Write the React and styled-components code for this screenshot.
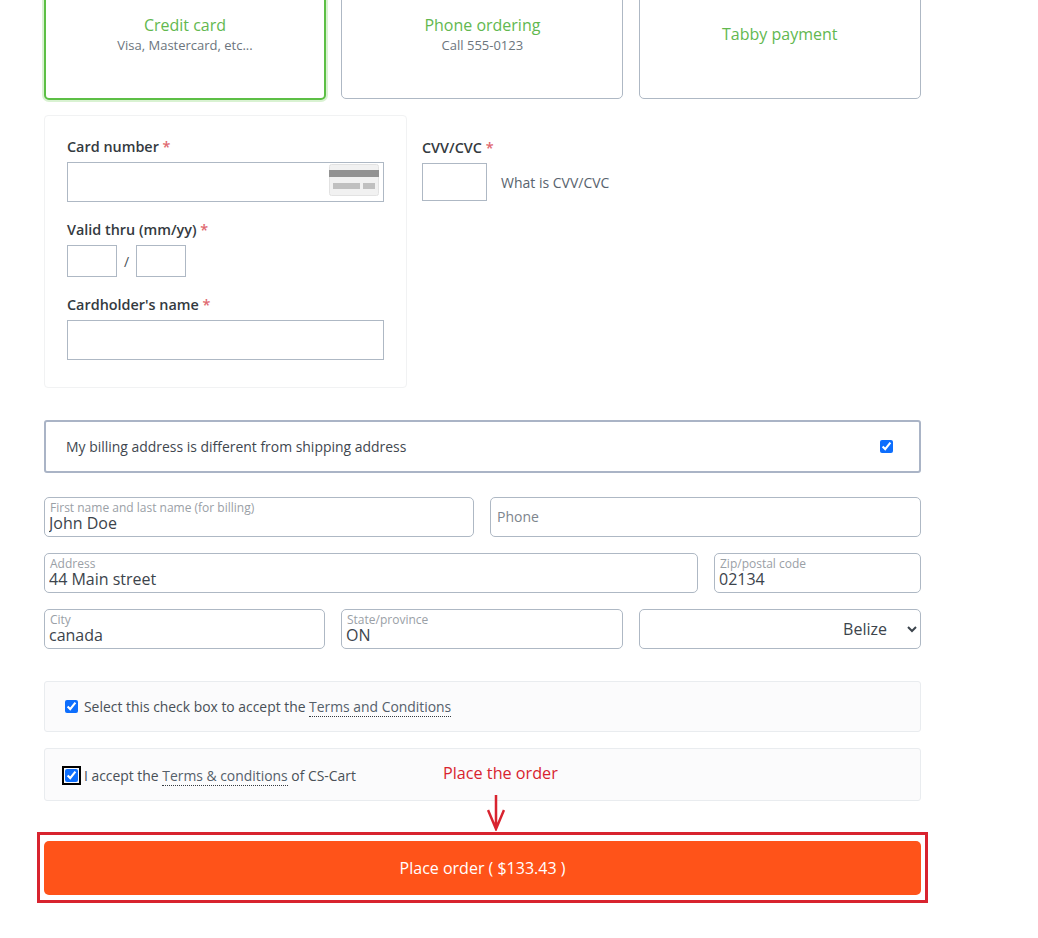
import React from "react";
import styled, { createGlobalStyle } from "styled-components";

const GlobalStyle = createGlobalStyle`
    html, body {
        margin: 0;
        padding: 0;
        background: #fff;
        font-family: "Open Sans", "Noto Sans", sans-serif;
        color: #343a40;
        overflow: hidden;
    }
    * {
        box-sizing: border-box;
    }
`;

function CardIcon() {
    return (
        <CardSvg viewBox="0 0 50 32" width="50" height="32">
            <rect x="0.5" y="0.5" width="49" height="31" rx="2" fill="#f1f1f1" stroke="#e2e2e2" />
            <rect x="0" y="6" width="50" height="7" fill="#929292" />
            <rect x="4" y="19" width="27" height="6" fill="#c0c0c0" />
            <rect x="34" y="19" width="12" height="6" fill="#c0c0c0" />
        </CardSvg>
    );
}

function Tab({ active, title, note }) {
    return (
        <TabBox $active={active}>
            <TabTitle>{title}</TabTitle>
            {note && <TabNote>{note}</TabNote>}
        </TabBox>
    );
}

function Field({ label, value, placeholder }) {
    return (
        <FieldBox>
            {label && <FieldLabel>{label}</FieldLabel>}
            {placeholder ? <Placeholder>{placeholder}</Placeholder> : <FieldValue readOnly defaultValue={value} />}
        </FieldBox>
    );
}

export default function App() {
    return (
        <Page>
            <GlobalStyle />
            <Tabs>
                <Tab active title="Credit card" note="Visa, Mastercard, etc..." />
                <Tab title="Phone ordering" note="Call 555-0123" />
                <Tab title="Tabby payment" />
            </Tabs>

            <CardRow>
                <CardPanel>
                    <Group>
                        <Label>Card number <Star>*</Star></Label>
                        <NumberBox>
                            <CardIcon />
                        </NumberBox>
                    </Group>
                    <Group>
                        <Label>Valid thru (mm/yy) <Star>*</Star></Label>
                        <DateRow>
                            <DateInput />
                            <Slash>/</Slash>
                            <DateInput />
                        </DateRow>
                    </Group>
                    <Group>
                        <Label>Cardholder's name <Star>*</Star></Label>
                        <TextBox />
                    </Group>
                </CardPanel>
                <CvvColumn>
                    <Label>CVV/CVC <Star>*</Star></Label>
                    <CvvRow>
                        <CvvInput />
                        <CvvHelp>What is CVV/CVC</CvvHelp>
                    </CvvRow>
                </CvvColumn>
            </CardRow>

            <BillingToggle>
                <span>My billing address is different from shipping address</span>
                <Check type="checkbox" defaultChecked />
            </BillingToggle>

            <Fields>
                <FieldRow $columns="430px 431px">
                    <Field label="First name and last name (for billing)" value="John Doe" />
                    <Field placeholder="Phone" />
                </FieldRow>
                <FieldRow $columns="654px 207px">
                    <Field label="Address" value="44 Main street" />
                    <Field label="Zip/postal code" value="02134" />
                </FieldRow>
                <FieldRow $columns="281px 282px 282px">
                    <Field label="City" value="canada" />
                    <Field label="State/province" value="ON" />
                    <Country defaultValue="Belize">
                        <option>Belize</option>
                    </Country>
                </FieldRow>
            </Fields>

            <TermsBox $height={51}>
                <Check type="checkbox" defaultChecked />
                <span>Select this check box to accept the <TermsLink>Terms and Conditions</TermsLink></span>
            </TermsBox>

            <TermsBox $height={53} $tight>
                <FocusCheck type="checkbox" defaultChecked />
                <span>I accept the <TermsLink>Terms &amp; conditions</TermsLink> of CS-Cart</span>
                <Note>Place the order</Note>
            </TermsBox>

            <OrderFrame>
                <Arrow viewBox="0 0 18 36" width="18" height="36">
                    <path d="M9 0 V34 M1 15 L9 34 L17 15" fill="none" stroke="#d8232f" strokeWidth="2.5" />
                </Arrow>
                <OrderButton>Place order ( $133.43 )</OrderButton>
            </OrderFrame>
        </Page>
    );
}

const Page = styled.div`
    width: 877px;
    margin: -31px 0 0 44px;
`;

const Tabs = styled.div`
    display: grid;
    grid-template-columns: 282px 282px 282px;
    column-gap: 15.4px;
`;

const TabBox = styled.div`
    height: ${({ $active }) => ($active ? "131px" : "130px")};
    margin-bottom: ${({ $active }) => ($active ? "-1px" : "0")};
    display: flex;
    flex-direction: column;
    align-items: center;
    justify-content: center;
    padding-bottom: ${({ $active }) => ($active ? "1px" : "0")};
    border: ${({ $active }) => ($active ? "2px solid #5cbf45" : "1px solid #aeb8c4")};
    border-radius: 5px;
    background: #fff;
    box-shadow: ${({ $active }) => ($active ? "0 0 0 2px #d9f2d2" : "none")};
`;

const TabTitle = styled.div`
    font-size: 16px;
    line-height: 22px;
    color: #62b84f;
`;

const TabNote = styled.div`
    font-size: 13px;
    line-height: 19px;
    color: #6c757d;
`;

const CardRow = styled.div`
    display: flex;
    margin-top: 16px;
`;

const CardPanel = styled.div`
    width: 363px;
    height: 273px;
    padding: 22px 22px 0;
    border: 1px solid #f1f2f3;
    border-radius: 4px;
    display: flex;
    flex-direction: column;
    gap: 19px;
`;

const Group = styled.div`
    display: flex;
    flex-direction: column;
    gap: 7px;
`;

const Label = styled.div`
    font-size: 14.4px;
    line-height: 17px;
    font-weight: 600;
    color: #343a40;
`;

const Star = styled.span`
    color: #e0686f;
`;

const NumberBox = styled.div`
    height: 40px;
    border: 1px solid #aeb8c4;
    display: flex;
    align-items: flex-start;
    justify-content: flex-end;
    padding: 1px 4px 0 0;
`;

const CardSvg = styled.svg`
    display: block;
`;

const DateRow = styled.div`
    display: flex;
    align-items: center;
`;

const DateInput = styled.div`
    width: 50px;
    height: 32px;
    border: 1px solid #aeb8c4;
`;

const Slash = styled.span`
    width: 19px;
    text-align: center;
    font-size: 14px;
    color: #495057;
`;

const TextBox = styled.div`
    height: 40px;
    border: 1px solid #aeb8c4;
`;

const CvvColumn = styled.div`
    margin: 24px 0 0 15px;
    display: flex;
    flex-direction: column;
    gap: 7px;
`;

const CvvRow = styled.div`
    display: flex;
    align-items: center;
    gap: 14px;
`;

const CvvInput = styled.div`
    width: 65px;
    height: 38px;
    border: 1px solid #aeb8c4;
`;

const CvvHelp = styled.span`
    font-size: 14px;
    color: #58636e;
`;

const BillingToggle = styled.div`
    margin-top: 32px;
    height: 53px;
    border: 2px solid #aab4c6;
    border-radius: 3px;
    display: flex;
    align-items: center;
    justify-content: space-between;
    padding: 0 26px 0 20px;
    font-size: 13.95px;
    color: #3f474f;
`;

const Check = styled.input`
    width: 13px;
    height: 13px;
    margin: 0;
    flex: none;
    accent-color: #0d6efd;
`;

const FocusCheck = styled(Check)`
    outline: 2px solid #000;
    outline-offset: 1px;
    border-radius: 2px;
`;

const Fields = styled.div`
    margin-top: 24px;
    display: flex;
    flex-direction: column;
    gap: 16px;
`;

const FieldRow = styled.div`
    display: grid;
    grid-template-columns: ${({ $columns }) => $columns};
    column-gap: 16px;
    justify-content: space-between;
`;

const FieldBox = styled.div`
    height: 40px;
    border: 1px solid #aeb8c4;
    border-radius: 5px;
    padding: 0 4px;
    display: flex;
    flex-direction: column;
    justify-content: center;
    background: #fff;
`;

const FieldLabel = styled.div`
    font-size: 12px;
    line-height: 13px;
    padding-left: 1px;
    color: #9aa0a6;
    white-space: nowrap;
`;

const FieldValue = styled.input`
    border: 0;
    padding: 0;
    outline: none;
    width: 100%;
    font-family: inherit;
    font-size: 16px;
    line-height: 19px;
    height: 19px;
    color: #3c444c;
    background: transparent;
`;

const Placeholder = styled.div`
    font-size: 14px;
    padding: 0 0 2px 2px;
    color: #7d858d;
`;

const Country = styled.select`
    height: 40px;
    width: 100%;
    border: 1px solid #aeb8c4;
    border-radius: 5px;
    background: #fff;
    font-family: inherit;
    font-size: 16px;
    color: #3c444c;
    text-align: right;
    padding: 0 17px 0 0;
`;

const TermsBox = styled.div`
    position: relative;
    margin-top: ${({ $tight }) => ($tight ? "16px" : "32px")};
    height: ${({ $height }) => $height}px;
    background: #fbfbfc;
    border: 1px solid #e9ecef;
    border-radius: 3px;
    display: flex;
    align-items: center;
    gap: 6px;
    padding: ${({ $tight }) => ($tight ? "2px 0 0 20px" : "0 0 0 20px")};
    font-size: 13.9px;
    color: #495057;
`;

const TermsLink = styled.span`
    color: #55606b;
    border-bottom: 1px dotted #343a40;
`;

const Note = styled.div`
    position: absolute;
    left: 398px;
    top: 13px;
    font-size: 16.2px;
    line-height: 22px;
    color: #d8232f;
`;

const OrderFrame = styled.div`
    position: relative;
    margin: 31px 0 0 -7px;
    width: 891px;
    height: 71px;
    padding: 6px 0 0 4px;
    border: 3px solid #d8232f;
    background: #fff;
`;

const Arrow = styled.svg`
    position: absolute;
    left: 447px;
    top: -40px;
`;

const OrderButton = styled.button`
    display: block;
    width: 877px;
    height: 54px;
    margin: 0;
    border: 0;
    border-radius: 5px;
    background: #ff5319;
    color: #fff;
    font-family: inherit;
    font-size: 16px;
`;
